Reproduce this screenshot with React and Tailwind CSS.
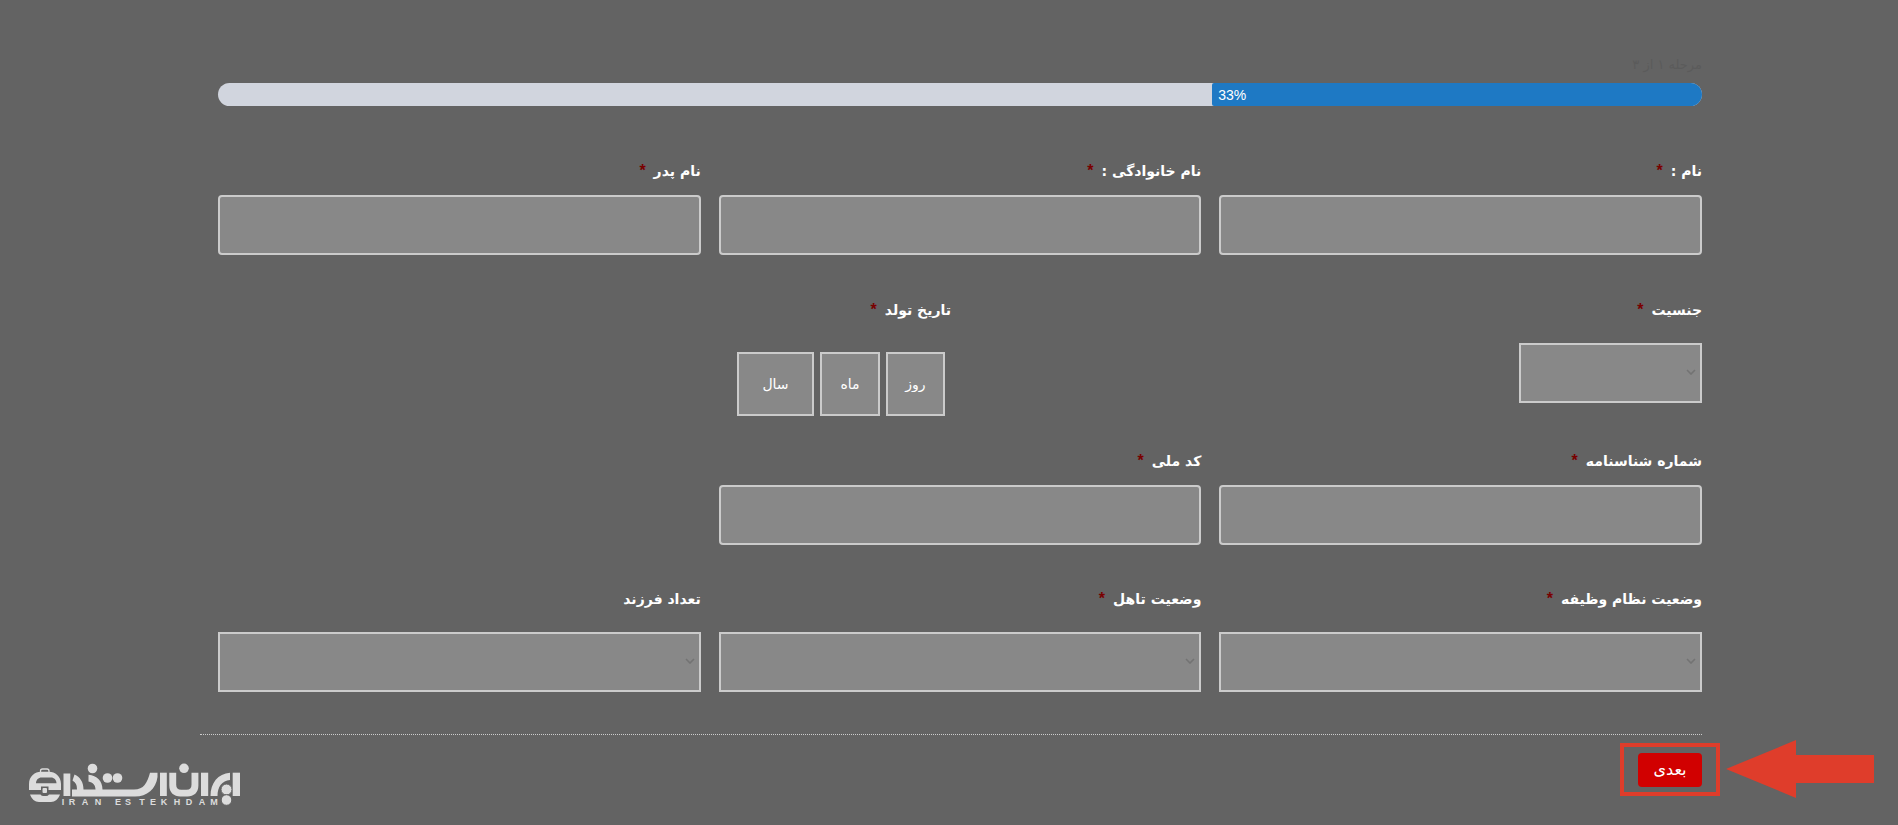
const box = "block border-2 border-[#cbcbcb] bg-[#888888] text-white outline-none";

function Label({ htmlFor, children, required }) {
  return (
    <label htmlFor={htmlFor} className="flex h-6 items-center gap-2 text-sm leading-6 font-bold text-white">
      <span>{children}</span>
      {required && <span className="font-['Liberation_Sans',sans-serif] text-base text-[#790000]">*</span>}
    </label>
  );
}

function TextField({ id, label }) {
  return (
    <div className="pl-[18px]">
      <Label htmlFor={id} required>{label}</Label>
      <input id={id} type="text" className={`${box} mt-3 h-[60px] w-full rounded-[4px] px-3`} />
    </div>
  );
}

function Select({ id, wide }) {
  return (
    <div className={wide ? "relative mt-[21px] w-full" : "relative mt-[21px] w-[183px]"}>
      <select id={id} className={`${box} h-[60px] w-full appearance-none px-6`}>
        <option value=""></option>
      </select>
      <svg viewBox="0 0 10 6" className="pointer-events-none absolute top-[26px] right-[6px] h-[6px] w-[10px]">
        <path d="M1 1l4 4 4-4" fill="none" stroke="#737373" strokeWidth="1.6" />
      </svg>
    </div>
  );
}

function SelectField({ id, label, required }) {
  return (
    <div className="pl-[18px]">
      <Label htmlFor={id} required={required}>{label}</Label>
      <Select id={id} wide />
    </div>
  );
}

function DatePart({ id, label, width }) {
  return (
    <input
      id={id}
      type="text"
      aria-label={label}
      placeholder={label}
      className={`${box} h-16 ${width} text-center text-sm placeholder:text-white`}
    />
  );
}

function Logo() {
  return (
    <svg viewBox="0 0 213 44" direction="ltr" className="h-[44px] w-[213px]" fill="#dcdcdc">
      {/* briefcase */}
      <path d="M12.5 9v-1q0-2 2-2h4.500q2 0 2 2v1" fill="none" stroke="#dcdcdc" strokeWidth="1.3" />
      <path
        fillRule="evenodd"
        d="M1 27V21C1 13 7 8.700 13 8.700h8C27 8.700 33 13 33 21v6H20.500v-3.500h-7.500V27zM8 20.300h20.500c0-3.500-2.500-5.800-5.500-5.800h-9.500c-3 0-5.500 2.300-5.500 5.800z"
      />
      <rect x="14.500" y="25" width="4.500" height="5" rx="1" />
      <path d="M2 31.500h10.500q1 1.500 3 1.500h2.500q2 0 3-1.500h11c-1.500 4.500-5 7.500-9 7.500H11c-4 0-7.500-3-9-7.500z" />
      {/* letter strokes */}
      <rect x="35.500" y="10.500" width="6.800" height="22.500" />
      <path
        d="M46.500 11.500C52 14 55.500 19 55.500 26.500H67.500C67.500 22 65 19.500 60.500 18.500V11.800C69 12.500 74.500 18 74.500 26.500H106C116 26.500 119 20 122 9.700H129.500V14C128 26 119 33.500 107 33.500H44V26.500H49C49 22 48 20 44.500 17.500z"
      />
      <circle cx="64.500" cy="5.500" r="4.800" />
      <circle cx="79.500" cy="15" r="4.800" />
      <circle cx="89.500" cy="15" r="4.800" />
      <rect x="132" y="9.700" width="6.800" height="23.300" />
      <path d="M141.300 9.700h6.900v12q0 5 5 5h5.300q5 0 5-5v-12h6.900v12.800c0 7-4.500 11-11 11h-7c-6.500 0-11.100-4-11.100-11z" />
      <circle cx="156" cy="5.300" r="4.800" />
      <rect x="173" y="9.700" width="7.200" height="23.300" />
      <path d="M182.500 33C182.500 20 190 10.500 202 9.700v7.300C194 18 189.500 23.500 189.500 33z" />
      <circle cx="198.500" cy="26.500" r="5.500" stroke="#636363" strokeWidth="1" />
      <circle cx="198.500" cy="37" r="5.300" stroke="#636363" strokeWidth="1" />
      <rect x="204.700" y="9.700" width="7.300" height="23.300" />
      <text
        y="42"
        x="35 44 57 70 90 100 114 125 136 149 161 174 186"
        textAnchor="middle"
        fontSize="9"
        fontWeight="bold"
        fontFamily="Liberation Sans, sans-serif"
      >
        IRANESTEKHDAM
      </text>
    </svg>
  );
}

export default function App() {
  return (
    <div dir="rtl" className="relative min-h-screen bg-[#636363] font-['DejaVu_Sans',sans-serif]">
      <form className="mr-[196px] ml-[200px] pt-[53px]" onSubmit={(e) => e.preventDefault()}>
        <p className="text-[13px] leading-6 text-[#5b5b5b]">مرحله ۱ از ۳</p>
        <div className="mt-[6px] ml-[18px] h-[23px] overflow-hidden rounded-full bg-[#d1d5de]">
          <div className="flex h-full w-[33%] items-center justify-end rounded-l-[2px] bg-[#1e79c4] px-[6px] font-['Liberation_Sans',sans-serif] text-sm text-white">
            <span dir="ltr">33%</span>
          </div>
        </div>

        <div className="mt-[53px] grid grid-cols-3">
          <TextField id="first" label="نام :" />
          <TextField id="last" label="نام خانوادگی :" />
          <TextField id="father" label="نام پدر" />
        </div>

        <div className="mt-[43px] grid grid-cols-2">
          <div>
            <Label htmlFor="gender" required>جنسیت</Label>
            <Select id="gender" />
          </div>
          <div>
            <Label htmlFor="day" required>تاریخ تولد</Label>
            <div className="mt-[30px] mr-[6px] flex gap-[6px]">
              <DatePart id="day" label="روز" width="w-[59px]" />
              <DatePart id="month" label="ماه" width="w-[60px]" />
              <DatePart id="year" label="سال" width="w-[77px]" />
            </div>
          </div>
        </div>

        <div className="mt-[33px] grid grid-cols-3">
          <TextField id="idno" label="شماره شناسنامه" />
          <TextField id="national" label="کد ملی" />
        </div>

        <div className="mt-[42px] grid grid-cols-3">
          <SelectField id="military" label="وضعیت نظام وظیفه" required />
          <SelectField id="marital" label="وضعیت تاهل" required />
          <SelectField id="children" label="تعداد فرزند" />
        </div>

        <div className="mt-[42px] border-t border-dotted border-[#cccccc] pt-[18px]">
          <div className="relative w-16">
            <button type="submit" className="block h-[34px] w-16 rounded-[4px] bg-[#d10000] text-base text-white">بعدی</button>
            <div className="pointer-events-none absolute -inset-x-[18px] -top-[10px] h-[53px] border-4 border-[#df3d2b]" />
            <svg viewBox="0 0 148 58" className="absolute -top-[13px] -right-[172px] h-[58px] w-[148px]">
              <path d="M0 29L70 0v15h78v28H70v15z" fill="#df3d2b" />
            </svg>
          </div>
        </div>
      </form>
      <div className="absolute bottom-[18px] left-[28px]">
        <Logo />
      </div>
    </div>
  );
}
